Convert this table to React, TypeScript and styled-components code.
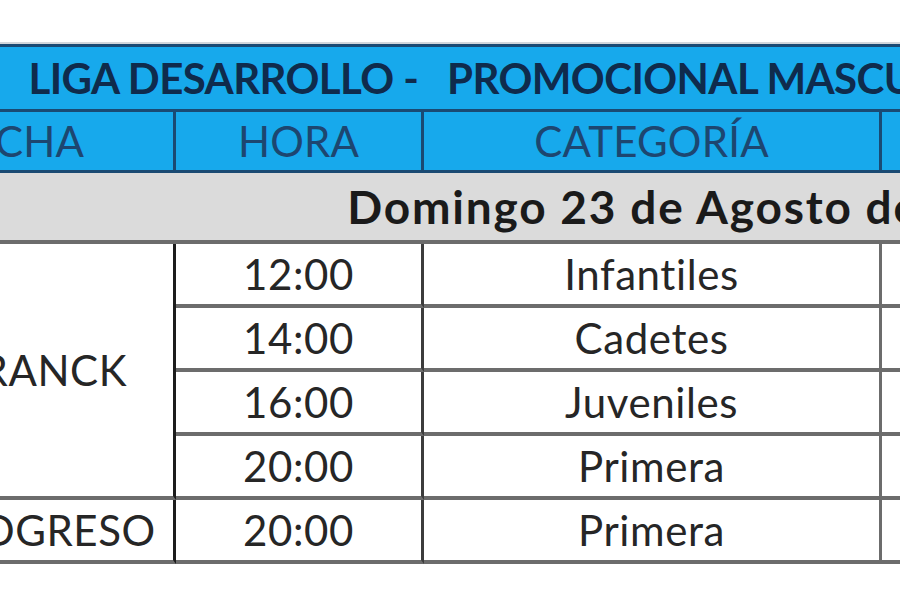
import React from 'react';
import styled, { createGlobalStyle } from 'styled-components';

const GlobalStyle = createGlobalStyle`
  html, body {
    margin: 0;
    padding: 0;
    background: #ffffff;
  }
  body {
    font-family: Lato, "Open Sans", "Liberation Sans", sans-serif;
  }
`;

const BLUE = '#17a9ec';
const NAVY = '#1a4a73';
const GRID = '#6c6c6c';

interface Match {
  hora: string;
  categoria: string;
  partido: string;
}

const franck: Match[] = [
  { hora: '12:00', categoria: 'Infantiles', partido: 'Franck - Libertad' },
  { hora: '14:00', categoria: 'Cadetes', partido: 'Franck - Libertad' },
  { hora: '16:00', categoria: 'Juveniles', partido: 'Franck - Libertad' },
  { hora: '20:00', categoria: 'Primera', partido: 'Franck - Libertad' },
];

const progreso: Match[] = [{ hora: '20:00', categoria: 'Primera', partido: 'Progreso - Unión' }];

const Page = styled.div`
  width: 900px;
  height: 600px;
  overflow: hidden;
  padding-top: 44px;
  box-sizing: border-box;
`;

const Sheet = styled.div`
  display: grid;
  grid-template-columns: 351px 248px 458px 613px;
  grid-template-rows: 65px 61px 71px repeat(5, 64px);
  width: max-content;
  margin-left: -175px;
  border-top: 3px solid ${NAVY};
  box-shadow: 0 -2px 0 #d3d7db;
  font-size: 42px;
`;

const Cell = styled.div`
  display: flex;
  align-items: center;
  justify-content: center;
  box-sizing: border-box;
  white-space: pre;
  line-height: 1;
`;

const TitleCell = styled(Cell)`
  grid-column: 1 / -1;
  padding-right: 60px;
  background: ${BLUE};
  border-bottom: 3px solid ${NAVY};
  color: #0f2b4c;
  font-weight: 700;
  letter-spacing: -0.6px;
`;

const HeadCell = styled(Cell)<{ $last?: boolean; $shift?: number }>`
  background: ${BLUE};
  border-bottom: 3px solid ${NAVY};
  border-right: ${({ $last }) => ($last ? 'none' : `3px solid ${NAVY}`)};
  padding-right: ${({ $shift }) => ($shift ? `${$shift}px` : '0')};
  color: #1d4670;
  letter-spacing: 0.2px;
`;

const DateCell = styled(Cell)`
  grid-column: 1 / -1;
  padding-left: 74px;
  background: #dbdbdb;
  border-bottom: 4px solid ${GRID};
  color: #1a1a1a;
  font-size: 46px;
  font-weight: 700;
  letter-spacing: 1.8px;
`;

const DataCell = styled(Cell)<{ $line?: string; $span?: number; $shift?: number }>`
  background: #ffffff;
  border-bottom: 4px solid ${GRID};
  border-right: ${({ $line }) => ($line ? `3px solid ${$line}` : 'none')};
  grid-row: ${({ $span }) => ($span ? `span ${$span}` : 'auto')};
  padding-right: ${({ $shift }) => ($shift ? `${$shift}px` : '0')};
  color: #262626;
  letter-spacing: 0.6px;
`;

const lineFor = ['#1c1c1c', '#3c3c3c', GRID];

function Rows({ cancha, matches }: { cancha: string; matches: Match[] }) {
  return (
    <>
      <DataCell $line={lineFor[0]} $span={matches.length} $shift={34}>
        {cancha}
      </DataCell>
      {matches.map((m, i) => (
        <React.Fragment key={i}>
          <DataCell $line={lineFor[1]}>{m.hora}</DataCell>
          <DataCell $line={lineFor[2]}>{m.categoria}</DataCell>
          <DataCell>{m.partido}</DataCell>
        </React.Fragment>
      ))}
    </>
  );
}

export default function App() {
  return (
    <Page>
      <GlobalStyle />
      <Sheet>
        <TitleCell>{'LIGA DESARROLLO -   PROMOCIONAL MASCULINO  -  FECHA 1'}</TitleCell>
        <HeadCell $shift={8}>CANCHA</HeadCell>
        <HeadCell>HORA</HeadCell>
        <HeadCell>CATEGORÍA</HeadCell>
        <HeadCell $last>PARTIDO</HeadCell>
        <DateCell>Domingo 23 de Agosto de 2015</DateCell>
        <Rows cancha="CLUB FRANCK" matches={franck} />
        <Rows cancha="CLUB PROGRESO" matches={progreso} />
      </Sheet>
    </Page>
  );
}
